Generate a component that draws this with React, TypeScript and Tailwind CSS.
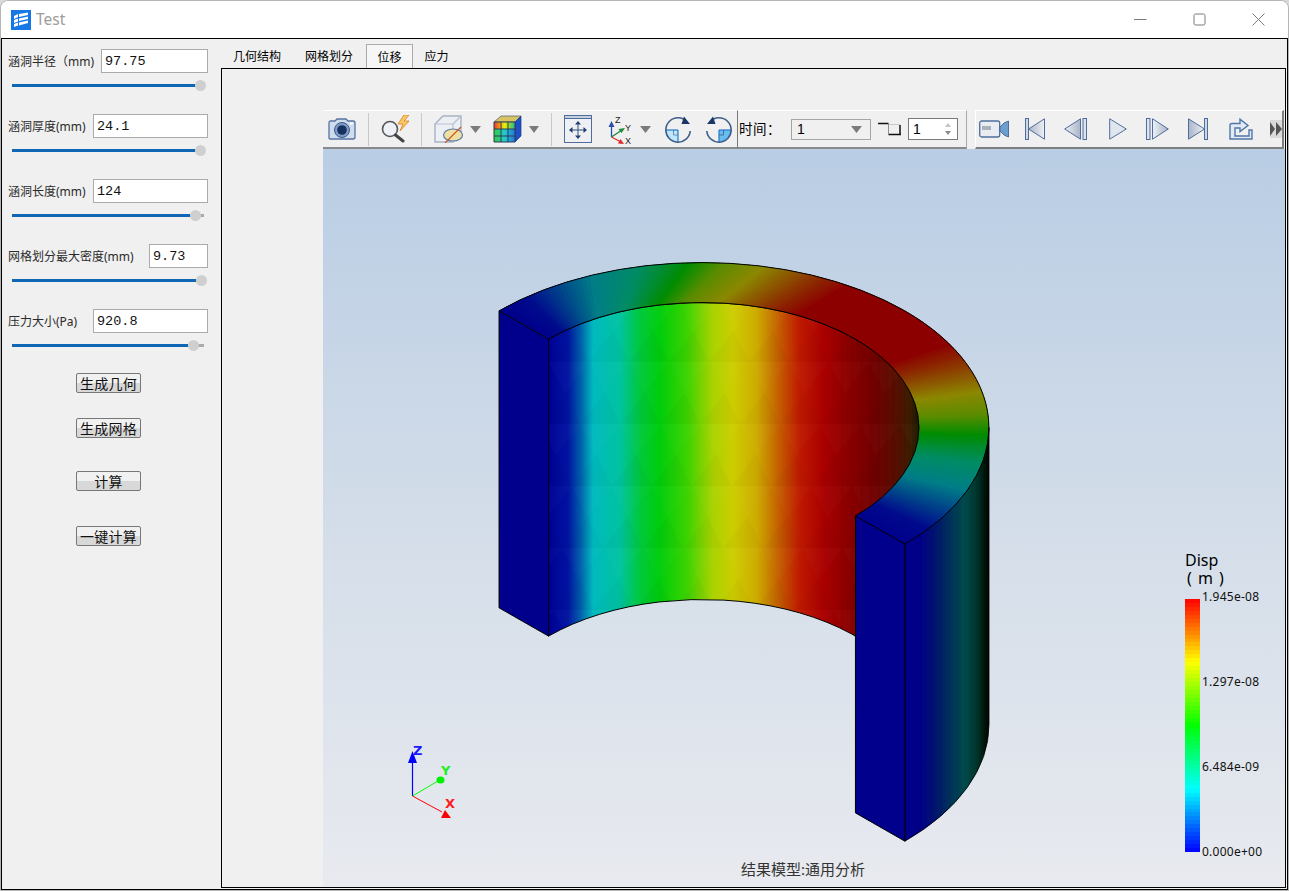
import React from "react";

const cjk = "font-['Noto_Sans','Noto_Sans_CJK_SC',sans-serif]";
const cx = 702, cy = 427.5, H = 297;
const pt = (rx: number, ry: number, t: number, dy = 0): [number, number] => [
  cx + rx * Math.cos((t * Math.PI) / 180),
  cy + dy - ry * Math.sin((t * Math.PI) / 180),
];
const f1 = (n: number) => n.toFixed(1);
const ringStops: [number, number[]][] = [
  [0, [0, 0, 140]], [0.08, [0, 10, 140]], [0.25, [0, 125, 135]], [0.36, [0, 140, 100]], [0.47, [0, 140, 0]],
  [0.55, [90, 140, 0]], [0.64, [140, 135, 0]], [0.76, [140, 50, 0]], [0.84, [140, 0, 0]], [1, [140, 0, 0]],
];
const ringColor = (f: number) => {
  for (let i = 1; i < ringStops.length; i++) {
    if (f <= ringStops[i][0]) {
      const [a, ca] = ringStops[i - 1];
      const [b, cb] = ringStops[i];
      const k = (f - a) / (b - a);
      return `rgb(${ca.map((c, j) => Math.round(c + (cb[j] - c) * k)).join(",")})`;
    }
  }
  return "rgb(140,0,0)";
};
const ringQuads = Array.from({ length: 180 }, (_, i) => {
  const t0 = 135 - i;
  const t1 = Math.max(-45, t0 - 2.5);
  const inner = (t: number) => t + (t > 45 ? 9 * Math.sin(((135 - t) * 2 * Math.PI) / 180) : 0);
  const p = [pt(287, 165, t0), pt(287, 165, t1), pt(217, 125, inner(t1)), pt(217, 125, inner(t0))];
  return { d: p.map((q) => q.map(f1).join(",")).join(" "), c: ringColor(Math.max(0, 1 - Math.abs(t0 - 0.5 - 45) / 90)) };
});
const wallStops: [number, string][] = [
  [549, "rgb(0,0,150)"], [568, "rgb(0,20,160)"], [580, "rgb(0,90,170)"], [593, "rgb(0,185,190)"], [620, "rgb(0,195,160)"],
  [640, "rgb(0,200,60)"], [660, "rgb(0,205,10)"], [687, "rgb(60,210,0)"], [713, "rgb(170,210,0)"], [733, "rgb(205,205,0)"],
  [757, "rgb(205,170,0)"], [780, "rgb(195,90,0)"], [800, "rgb(190,25,0)"], [823, "rgb(170,0,0)"], [847, "rgb(140,0,0)"],
  [873, "rgb(115,0,0)"], [897, "rgb(85,15,0)"], [910, "rgb(60,30,0)"], [919, "rgb(30,25,0)"],
];
const outerStops: [number, string][] = [
  [905, "rgb(0,0,140)"], [920, "rgb(0,0,135)"], [935, "rgb(0,20,110)"], [950, "rgb(0,50,90)"], [965, "rgb(0,75,75)"],
  [978, "rgb(0,50,40)"], [985, "rgb(0,20,10)"], [989, "rgb(0,5,0)"],
];
const Grad = ({ id, stops }: { id: string; stops: [number, string][] }) => {
  const a = stops[0][0], b = stops[stops.length - 1][0];
  return (
    <linearGradient id={id} gradientUnits="userSpaceOnUse" x1={a} x2={b} y1="0" y2="0">
      {stops.map(([x, c]) => <stop key={x} offset={(x - a) / (b - a)} stopColor={c} />)}
    </linearGradient>
  );
};

const A = pt(287, 165, 135), D = pt(287, 165, -45), B = pt(217, 125, 135), C = pt(217, 125, -45);
const wallPath = `M${B} A217 125 0 0 1 919 ${cy} L919 ${cy + H} A217 125 0 0 0 ${B[0]} ${B[1] + H} Z`;
const outerPath = `M${D} A287 165 0 0 0 989 ${cy} L989 ${cy + H} A287 165 0 0 1 ${D[0]} ${D[1] + H} Z`;
const wallFacets = Array.from({ length: 14 }, (_, i) => {
  const t = 3 + i * 3.6;
  return [pt(217, 125, t), pt(217, 125, t, H)];
});
const outerFacets = Array.from({ length: 12 }, (_, i) => {
  const t = -3 - i * 3.4;
  return [pt(287, 165, t), pt(287, 165, t, H)];
});

function Model() {
  return (
    <svg className="absolute left-0 top-0" width="962" height="738" viewBox="323 149 962 738">
      <defs>
        <Grad id="wall" stops={wallStops} />
        <Grad id="outer" stops={outerStops} />
        <pattern id="mesh" patternUnits="userSpaceOnUse" x="560" y="300" width="40" height="62" patternTransform="skewX(-8)">
          <polygon points="0,0 40,0 20,31" fill="#ffffff" fillOpacity="0.016" />
          <polygon points="20,31 0,62 40,62" fill="#000000" fillOpacity="0.022" />
        </pattern>
      </defs>
      <path d={wallPath} fill="url(#wall)" />
      <path d={wallPath} fill="url(#mesh)" />
      {wallFacets.map(([a, b], i) => <line key={i} x1={a[0]} y1={a[1]} x2={b[0]} y2={b[1]} stroke="#000" strokeOpacity="0.07" />)}
      <path d={wallPath} fill="none" stroke="#000" strokeWidth="1" />
      {ringQuads.map((q, i) => <polygon key={i} points={q.d} fill={q.c} />)}
      <path d={`M${A} A287 165 0 0 1 ${D} M${B} A217 125 0 0 1 ${C}`} fill="none" stroke="#000" strokeWidth="1" />
      <path d={outerPath} fill="url(#outer)" stroke="#000" strokeWidth="0.8" />
      {outerFacets.map(([a, b], i) => <line key={i} x1={a[0]} y1={a[1]} x2={b[0]} y2={b[1]} stroke="#000" strokeOpacity="0.07" />)}
      <polygon points={`${A} ${B} ${B[0]},${B[1] + H} ${A[0]},${A[1] + H}`} fill="#00008c" stroke="#000" strokeWidth="1" />
      <polygon points={`${C} ${D} ${D[0]},${D[1] + H} ${C[0]},${C[1] + H}`} fill="#00008c" stroke="#000" strokeWidth="1" />
      <g fontFamily="DejaVu Sans, sans-serif" fontSize="13" fontWeight="700">
        <line x1="412.5" y1="796" x2="412.5" y2="758" stroke="#0000ff" strokeWidth="1.2" />
        <polygon points="412.5,751 408,763 417,763" fill="#0000ff" />
        <line x1="412.5" y1="796" x2="438" y2="781" stroke="#00ff00" strokeWidth="1" />
        <ellipse cx="440.5" cy="780" rx="4" ry="3.5" fill="#00f000" />
        <line x1="412.5" y1="796" x2="442" y2="812" stroke="#ff0000" strokeWidth="1" />
        <polygon points="445,810 441,818 451,818" fill="#ff0000" />
        <text x="413" y="755" fill="#1a1aff">Z</text>
        <text x="441" y="775" fill="#22ee22">Y</text>
        <text x="445" y="808" fill="#ff1a1a">X</text>
      </g>
    </svg>
  );
}

function rainbow(f: number) {
  const s: [number, number[]][] = [[0, [0, 0, 255]], [0.25, [0, 255, 255]], [0.5, [0, 255, 0]], [0.75, [255, 255, 0]], [1, [255, 0, 0]]];
  for (let i = 1; i < s.length; i++) {
    if (f <= s[i][0]) {
      const k = (f - s[i - 1][0]) / 0.25;
      return `rgb(${s[i - 1][1].map((c, j) => Math.round(c + (s[i][1][j] - c) * k)).join(",")})`;
    }
  }
  return "rgb(255,0,0)";
}

function Legend() {
  const n = 64;
  const rows: [string, string][] = [["top-[-10px]", "1.945e-08"], ["top-[75px]", "1.297e-08"], ["top-[160px]", "6.484e-09"], ["top-[245px]", "0.000e+00"]];
  return (
    <div className={`absolute left-[862px] top-[403px] w-[90px] text-black ${cjk}`}>
      <div className="h-[16px] text-[16px] leading-[16px]">Disp</div>
      <div className="mt-[2px] ml-[2px] h-[16px] whitespace-pre text-[16px] leading-[16px] tracking-[1px]">( m )</div>
      <div className="relative mt-[13px] h-[253px] w-[15px]">
        <svg width="15" height="253" shapeRendering="crispEdges" className="block">
          {Array.from({ length: n }, (_, i) => (
            <rect key={i} x="0" y={(i * 253) / n} width="15" height={253 / n + 0.5} fill={rainbow(1 - (i + 0.5) / n)} />
          ))}
        </svg>
        {rows.map(([p, v]) => (
          <div key={v} className={`absolute left-[17px] ${p} whitespace-nowrap text-[12px] leading-[16px] tracking-[0.25px] text-[#111]`}>{v}</div>
        ))}
      </div>
    </div>
  );
}

function Field({ label, value, w, fill, knob }: { label: string; value: string; w: string; fill: string; knob: string }) {
  return (
    <div className="flex flex-col">
      <div className="flex h-[24px] items-center justify-between">
        <span className="mt-[1px] whitespace-nowrap text-[12px] text-[#2b2b2b]">{label}</span>
        <div className={`${w} flex h-[24px] items-center border border-[#ababab] bg-white pl-[3px] pt-[2px] font-['Liberation_Mono',monospace] text-[13.5px] text-[#111]`}>{value}</div>
      </div>
      <div className="relative mt-[7px] ml-[4px] h-[11px] w-[192px]">
        <div className="absolute left-0 right-0 top-[4px] h-[3px] bg-[#ababab]" />
        <div className={`absolute left-0 top-[4px] h-[3px] bg-[#0f66b5] ${fill}`} />
        <div className={`absolute top-0 h-[11px] w-[11px] rounded-full bg-[#cfcfcf] ${knob}`} />
      </div>
    </div>
  );
}

const Btn = ({ t, m }: { t: string; m: string }) => (
  <button className={`${m} ml-[68px] block h-[20px] w-[65px] rounded-[2px] border border-[#777] bg-[linear-gradient(#f1f1f1_50%,#d8d8d8_50%)] text-[14px] leading-[17px] tracking-[0.3px] text-[#111]`}>{t}</button>
);

const Arrow = ({ m, w = 10 }: { m: string; w?: number }) => (
  <svg className={`${m} shrink-0`} width={w} height="7" viewBox="0 0 11 7" preserveAspectRatio="none"><polygon points="0,0 11,0 5.5,7" fill="#7b7b7b" /></svg>
);
const Sep = ({ m }: { m: string }) => <div className={`${m} h-[33px] w-px shrink-0 bg-[#c9c9c9]`} />;

const navy = "#4e6d9c";
function TransportDefs() {
  return (
    <svg width="0" height="0" className="absolute">
      <defs>
        <linearGradient id="tp" x1="0" x2="1" y1="0" y2="0"><stop offset="0" stopColor="#eef1f6" /><stop offset="1" stopColor="#a9b4c6" /></linearGradient>
        <linearGradient id="tp2" x1="0" x2="1" y1="0" y2="0"><stop offset="0" stopColor="#a9b4c6" /><stop offset="1" stopColor="#eef1f6" /></linearGradient>
        <linearGradient id="rb" x1="0" x2="1" y1="0" y2="0"><stop offset="0" stopColor="#e33" /><stop offset="0.5" stopColor="#ee0" /><stop offset="1" stopColor="#2b8" /></linearGradient>
        <linearGradient id="rb2" x1="0" x2="1" y1="0" y2="0"><stop offset="0" stopColor="#3c3" /><stop offset="0.5" stopColor="#2cc" /><stop offset="1" stopColor="#27d" /></linearGradient>
      </defs>
    </svg>
  );
}

function Toolbar() {
  return (
    <div className="flex h-[39px] w-[962px]">
      <div className="flex h-[39px] w-[415px] items-center border-t border-b-2 border-r border-t-white border-b-[#8a8a8a] border-r-[#777] bg-[#f0f0f0]">
        <svg className="ml-[5px] shrink-0" width="28" height="24" viewBox="0 0 28 24">
          <path d="M2 4h5l2-2h9l2 2h5a2 2 0 0 1 2 2v14a2 2 0 0 1-2 2H2a1.5 1.5 0 0 1-1-2V6a2 2 0 0 1 1-2z" fill="#cfdced" stroke="#5673a0" strokeWidth="1.3" />
          <circle cx="14" cy="13" r="7.5" fill="#7f9cc4" stroke="#3d5a8a" />
          <circle cx="14" cy="13" r="4.8" fill="#16305f" />
          <rect x="22" y="5.5" width="3" height="2" fill="#fff" />
        </svg>
        <Sep m="ml-[12px]" />
        <svg className="ml-[12px] shrink-0" width="30" height="28" viewBox="0 0 30 28">
          <polygon points="23,0 17,9 22,9 19,16 28,6 23,6 28,0" fill="#f7c86a" stroke="#e08a1e" strokeWidth="0.9" />
          <circle cx="9" cy="14" r="7.5" fill="#eef2f7" stroke="#555" strokeWidth="1.6" />
          <line x1="14.5" y1="20" x2="22" y2="26" stroke="#444" strokeWidth="3" strokeLinecap="round" />
        </svg>
        <Sep m="ml-[10px]" />
        <svg className="ml-[12px] shrink-0" width="30" height="28" viewBox="0 0 30 28">
          <polygon points="1,9 9,1 27,1 27,18 19,27 1,27" fill="#eceff3" stroke="#a8b3c4" strokeWidth="1.4" />
          <polyline points="1,9 19,9 19,27" fill="none" stroke="#b8c1cf" strokeWidth="1.2" />
          <line x1="19" y1="9" x2="27" y2="1" stroke="#b8c1cf" strokeWidth="1.2" />
          <ellipse cx="19" cy="20" rx="9.5" ry="6" fill="#efe0a0" stroke="#5c7bab" strokeWidth="1.2" />
          <line x1="11" y1="28" x2="27" y2="12" stroke="#c9572b" strokeWidth="1.2" />
        </svg>
        <Arrow m="ml-[6px]" w={11} />
        <svg className="ml-[12px] shrink-0" width="29" height="28" viewBox="0 0 29 28">
          <polygon points="1,7 8,1 28,1 22,7" fill="#d9c465" stroke="#4a5a78" strokeWidth="0.7" />
          <polygon points="22,7 28,1 28,21 22,27" fill="#1f4fc4" stroke="#173a88" strokeWidth="0.7" />
          <rect x="1" y="7" width="21" height="7" fill="url(#rb)" />
          <rect x="1" y="14" width="21" height="13" fill="url(#rb2)" />
          <path d="M1 7h21v20H1zM8 7v20M15 7v20M1 14h21M1 21h21" fill="none" stroke="#2d3b57" strokeWidth="1" />
        </svg>
        <Arrow m="ml-[7px]" />
        <Sep m="ml-[12px]" />
        <svg className="ml-[12px] shrink-0" width="28" height="28" viewBox="0 0 28 28">
          <rect x="0.5" y="0.5" width="27" height="27" fill="#eef0f3" stroke={navy} />
          <rect x="0.5" y="0.5" width="27" height="3" fill="#c6cfdc" stroke={navy} strokeWidth="1" />
          <path d="M14 8v14M7 15h14" stroke="#33507f" strokeWidth="1" />
          <path d="M14 6l-3 3.5h6zM14 24l-3-3.5h6zM5 15l3.5-3v6zM23 15l-3.5-3v6z" fill="#1f3f73" />
        </svg>
        <svg className="ml-[16px] shrink-0" width="26" height="31" viewBox="0 0 26 31">
          <text x="7" y="9" fontSize="9" fontFamily="Liberation Sans, sans-serif" fill="#222">Z</text>
          <text x="17" y="17" fontSize="9" fontFamily="Liberation Sans, sans-serif" fill="#222">Y</text>
          <text x="17" y="30" fontSize="9" fontFamily="Liberation Sans, sans-serif" fill="#222">X</text>
          <line x1="3.5" y1="23" x2="3.5" y2="10" stroke="#2450a8" strokeWidth="1.3" />
          <polygon points="3.5,7 0.5,13 6.5,13" fill="#2450a8" />
          <line x1="3.5" y1="23" x2="14" y2="16" stroke="#1c8a3c" strokeWidth="1.3" />
          <polygon points="17,14 10.5,15 13.5,19" fill="#1c8a3c" />
          <line x1="3.5" y1="23" x2="13" y2="28" stroke="#e02a2a" strokeWidth="1.3" />
          <polygon points="16,30 10,29.5 12.5,25" fill="#e02a2a" />
        </svg>
        <Arrow m="ml-[6px]" w={11} />
        <svg className="ml-[14px] shrink-0" width="26" height="27" viewBox="0 0 26 27">
          <path d="M1 14h12v12A12.5 12.5 0 0 1 1 14z" fill="#bfe6fa" />
          <path d="M8.5 14v5h4.5" fill="none" stroke="#6a8cb8" strokeWidth="1" />
          <line x1="1" y1="14" x2="13" y2="14" stroke="#2878c8" strokeWidth="1.2" />
          <line x1="13" y1="14" x2="13" y2="26" stroke="#2878c8" strokeWidth="1.2" />
          <path d="M25.2 15A12.2 12.2 0 1 1 13 1.8C15 1.8 17 2.3 19 3.2" fill="none" stroke="#3e5f8c" strokeWidth="1.6" />
          <polygon points="19,0.5 25,8 16.5,8" fill="#1b3768" />
        </svg>
        <svg className="ml-[15px] shrink-0" width="26" height="27" viewBox="0 0 26 27">
          <path d="M25 14H13v12A12.5 12.5 0 0 0 25 14z" fill="#67bdf0" />
          <path d="M17.5 14v5H13" fill="none" stroke="#4e6d9c" strokeWidth="1" />
          <line x1="13" y1="14" x2="25" y2="14" stroke="#2878c8" strokeWidth="1.2" />
          <line x1="13" y1="14" x2="13" y2="26" stroke="#2878c8" strokeWidth="1.2" />
          <path d="M0.8 15A12.2 12.2 0 1 0 13 1.8C11 1.8 9 2.3 7 3.2" fill="none" stroke="#3e5f8c" strokeWidth="1.6" />
          <polygon points="7,0.5 1,8 9.5,8" fill="#1b3768" />
        </svg>
      </div>

      <div className="flex h-[39px] w-[229px] items-center border-t border-b-2 border-r border-t-white border-b-[#8a8a8a] border-r-[#a9a9a9] bg-[#f0f0f0]">
        <span className={`ml-[1px] w-[38px] shrink-0 whitespace-nowrap text-[13.5px] tracking-[0.5px] text-black ${cjk}`}>时间：</span>
        <div className="ml-[14px] flex h-[21px] w-[80px] shrink-0 items-center justify-between border border-[#a5a5a5] px-[5px] font-['Liberation_Sans',sans-serif] text-[14px] text-black">
          1
          <svg width="11" height="7" viewBox="0 0 11 7" className="mr-[3px]"><polygon points="0,0 11,0 5.5,7" fill="#7b7b7b" /></svg>
        </div>
        <svg className="ml-[7px] shrink-0" width="23" height="14" viewBox="0 0 23 14">
          <path d="M11 2.5h11" fill="none" stroke="#c8c8c8" strokeWidth="1" />
          <path d="M0 1.5h10.5M22 3v9M10.5 12.5H23" fill="none" stroke="#111" strokeWidth="1.5" />
          <path d="M10.5 1v12" stroke="#777" strokeWidth="0.8" />
        </svg>
        <div className="ml-[7px] flex h-[22px] w-[50px] shrink-0 items-center justify-between border border-[#7a7a7a] bg-white pl-[4px] pr-[5px] font-['Liberation_Sans',sans-serif] text-[14px] text-black">
          1
          <svg width="8" height="14" viewBox="0 0 8 14"><polygon points="4,1 1,5 7,5" fill="#c4c4c4" /><polygon points="1,9 7,9 4,13" fill="#8a8a8a" /></svg>
        </div>
      </div>

      <div className="ml-[8px] flex h-[39px] w-[309px] items-center border-l border-t border-b-2 border-r-2 border-l-white border-t-white border-b-[#7f7f7f] border-r-[#7f7f7f] bg-[#f0f0f0]">
        <svg className="ml-[3px] shrink-0" width="30" height="18" viewBox="0 0 30 18">
          <rect x="0.7" y="1" width="20" height="16" rx="2" fill="#e9ecf1" stroke={navy} strokeWidth="1.3" />
          <rect x="3" y="6" width="9" height="4" fill="#a9b1bf" />
          <polygon points="21,7 25,3 29.5,1 29.5,17 25,15 21,11" fill="#6d9fce" stroke={navy} />
        </svg>
        <svg className="ml-[16px] shrink-0" width="20" height="22" viewBox="0 0 20 22">
          <rect x="0.5" y="0.5" width="3" height="21" fill="#cfd7e3" stroke={navy} />
          <polygon points="19.5,0.8 19.5,21.2 3.5,11" fill="url(#tp2)" stroke={navy} />
        </svg>
        <svg className="ml-[19px] shrink-0" width="23" height="22" viewBox="0 0 23 22">
          <polygon points="16.5,0.8 16.5,21.2 0.7,11" fill="url(#tp)" stroke={navy} />
          <rect x="19" y="0.5" width="3.5" height="21" fill="#dfe4ec" stroke={navy} />
        </svg>
        <svg className="ml-[22px] shrink-0" width="18" height="22" viewBox="0 0 18 22">
          <polygon points="0.7,0.8 0.7,21.2 17.3,11" fill="#e1e6ee" stroke={navy} />
        </svg>
        <svg className="ml-[19px] shrink-0" width="23" height="22" viewBox="0 0 23 22">
          <rect x="0.5" y="0.5" width="3.5" height="21" fill="#dfe4ec" stroke={navy} />
          <polygon points="6.5,0.8 6.5,21.2 22.3,11" fill="url(#tp)" stroke={navy} />
        </svg>
        <svg className="ml-[19px] shrink-0" width="20" height="22" viewBox="0 0 20 22">
          <polygon points="0.5,0.8 0.5,21.2 16.5,11" fill="url(#tp2)" stroke={navy} />
          <rect x="16.5" y="0.5" width="3" height="21" fill="#cfd7e3" stroke={navy} />
        </svg>
        <svg className="ml-[21px] shrink-0" width="24" height="23" viewBox="0 0 24 23">
          <path d="M1 21V7.5Q1 5.5 3 5.5H11V1.2L19 7.5L11 13.5V10H6V18H20V12H23V21Z" fill="#e3eaf4" stroke="#4f77a8" strokeWidth="1.4" />
        </svg>
        <svg className="ml-[17px] shrink-0" width="12" height="18" viewBox="0 0 12 18">
          <rect x="0" y="0" width="12" height="18" fill="#dadada" />
          <path d="M0 2l5 7-5 7zM6 2l6 7-6 7z" fill="#555" />
        </svg>
      </div>
    </div>
  );
}

export default function App() {
  return (
    <div className={`h-[891px] w-[1289px] overflow-hidden bg-[#d9d9d9] ${cjk}`}>
      <TransportDefs />
      <div className="flex h-[891px] w-[1289px] flex-col rounded-t-[8px] border border-[#b5b5b5] bg-white">
        <div className="flex h-[37px] shrink-0 items-center rounded-t-[8px] bg-white">
          <svg className="ml-[10px] shrink-0" width="20" height="20" viewBox="0 0 20 20">
            <rect width="20" height="20" fill="#1677e6" />
            <path d="M3 6l4-2v3L3 9zM3 10l4-1.5v3L3 13zM3 14l4-1.5v3L3 17z" fill="#fff" />
            <path d="M8 4l9-1.5V5L8 7zM8 8.5l9-2v2.5l-9 2zM8 12.5l9-2V13l-9 2.5z" fill="#fff" />
          </svg>
          <span className="ml-[5px] text-[15.5px] text-[#9d9d9d]">Test</span>
          <div className="ml-auto flex items-center">
            <svg width="13" height="13" viewBox="0 0 13 13"><line x1="0" y1="6.5" x2="12.5" y2="6.5" stroke="#7a7a7a" /></svg>
            <svg className="ml-[46px]" width="13" height="13" viewBox="0 0 13 13"><rect x="1" y="1" width="11" height="11" rx="1.5" fill="none" stroke="#7a7a7a" /></svg>
            <svg className="ml-[46px] mr-[23px]" width="13" height="13" viewBox="0 0 13 13"><path d="M0.5 0.5l12 12M12.5 0.5l-12 12" stroke="#7a7a7a" /></svg>
          </div>
        </div>
        <div className="flex h-[852px] shrink-0 border border-black bg-[#f0f0f0]">
          <div className="flex w-[219px] shrink-0 flex-col pl-[6px] pr-[13px] pt-[10px]">
            <div className="flex flex-col gap-[23px]">
              <Field label="涵洞半径（mm)" value="97.75" w="w-[107px]" fill="w-[183px]" knob="left-[183px]" />
              <Field label="涵洞厚度(mm)" value="24.1" w="w-[115px]" fill="w-[183px]" knob="left-[183px]" />
              <Field label="涵洞长度(mm)" value="124" w="w-[115px]" fill="w-[178px]" knob="left-[178px]" />
              <Field label="网格划分最大密度(mm)" value="9.73" w="w-[59px]" fill="w-[184px]" knob="left-[184px]" />
              <Field label="压力大小(Pa)" value="920.8" w="w-[115px]" fill="w-[176px]" knob="left-[176px]" />
            </div>
            <Btn t="生成几何" m="mt-[22px]" />
            <Btn t="生成网格" m="mt-[25px]" />
            <Btn t="计算" m="mt-[33px]" />
            <Btn t="一键计算" m="mt-[35px]" />
          </div>
          <div className="flex min-w-0 flex-1 flex-col pb-[1px] pr-[1px]">
            <div className="flex h-[29px] shrink-0 items-end text-[12px] text-black">
              <div className="flex h-[24px] w-[72px] items-center justify-center pt-[2px]">几何结构</div>
              <div className="flex h-[24px] w-[72px] items-center justify-center pt-[2px]">网格划分</div>
              <div className="ml-[1px] flex h-[24px] w-[47px] items-center justify-center border-x border-t border-[#ababab] bg-[#f6f6f6] pt-[2px]">位移</div>
              <div className="flex h-[24px] w-[47px] items-center justify-center pt-[2px]">应力</div>
            </div>
            <div className="flex-1 border border-black bg-[#f0f0f0] pl-[101px] pt-[41px]">
              <Toolbar />
              <div className="relative h-[738px] w-[962px] overflow-hidden bg-linear-to-b from-[#b9cde4] via-[#d3dde9] via-50% to-[#e8eaef]">
                <Model />
                <Legend />
                <div className="absolute bottom-[8px] left-[418px] whitespace-nowrap text-[15px] leading-[20px] text-[#333]">结果模型:通用分析</div>
              </div>
            </div>
          </div>
        </div>
      </div>
    </div>
  );
}
